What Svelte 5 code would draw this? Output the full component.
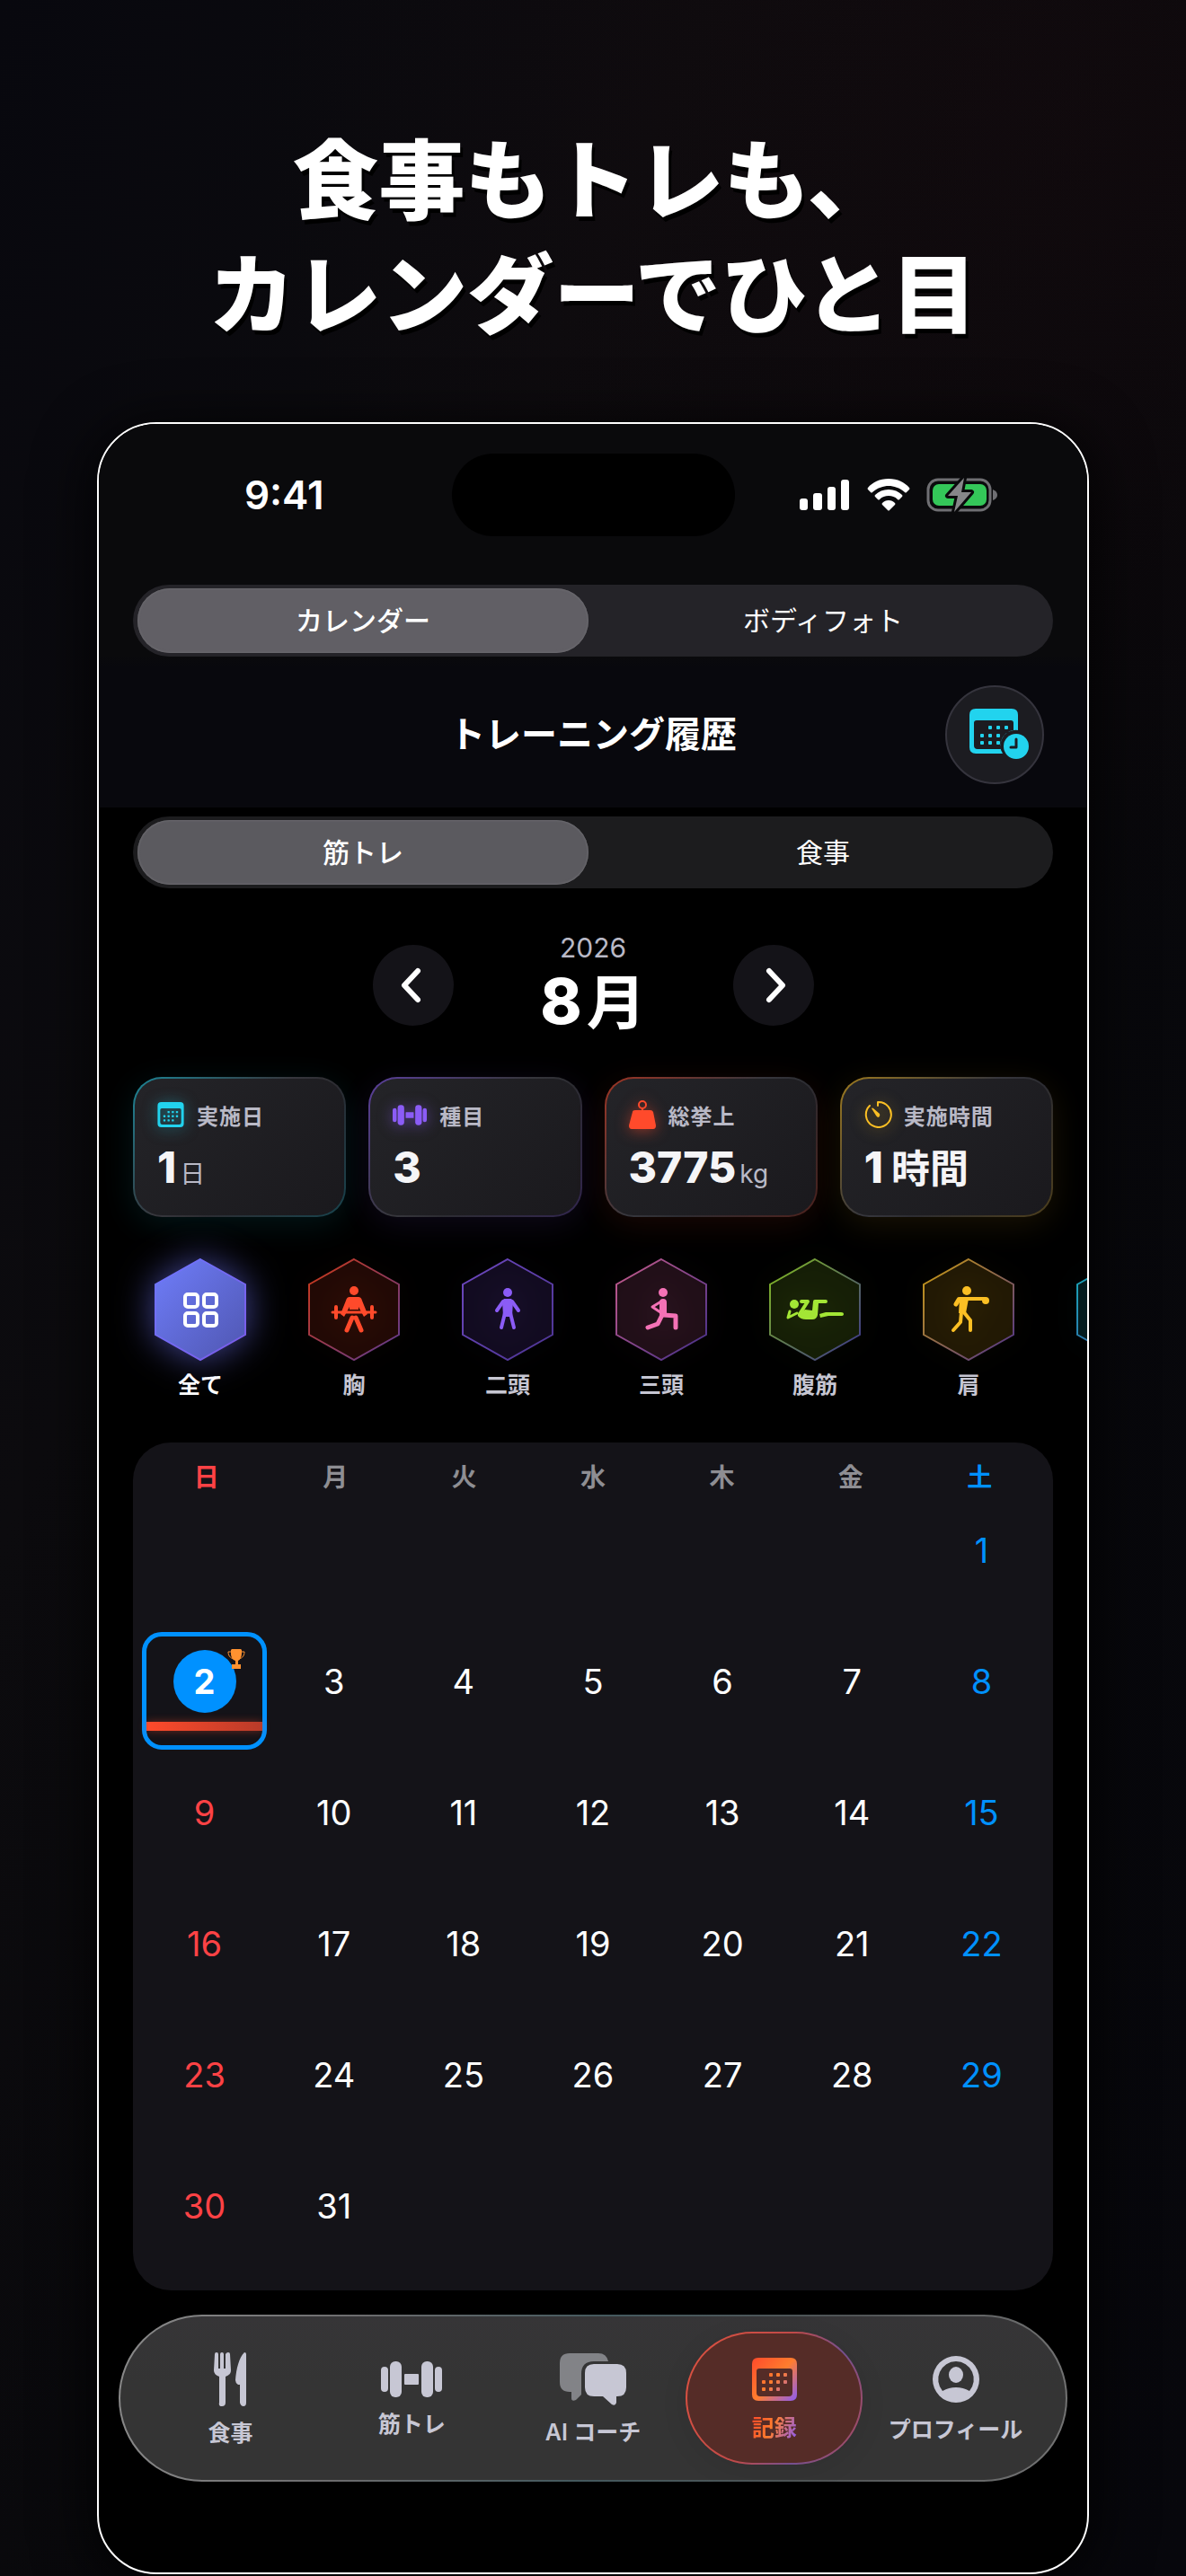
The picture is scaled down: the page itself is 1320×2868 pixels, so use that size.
<script>
  const stats = [
    { id: 'days', label: '実施日', value: '1', big: '', unit: '日', color: '#22d3ee', rgb: '34, 211, 238' },
    { id: 'kinds', label: '種目', value: '3', big: '', unit: '', color: '#8b5cf6', rgb: '139, 92, 246' },
    { id: 'weight', label: '総挙上', value: '3775', big: '', unit: 'kg', color: '#ff4a2b', rgb: '255, 74, 43' },
    { id: 'time', label: '実施時間', value: '1', big: '時間', unit: '', color: '#fbbf24', rgb: '251, 191, 36' }
  ];

  const parts = [
    { id: 'all', label: '全て', color: '#6f74fb', end: '#7a5be8' },
    { id: 'chest', label: '胸', color: '#ff4a2b', end: '#7c4dbb' },
    { id: 'biceps', label: '二頭', color: '#8b5cf6', end: '#6545c0' },
    { id: 'triceps', label: '三頭', color: '#f472b6', end: '#5b3fb4' },
    { id: 'abs', label: '腹筋', color: '#a3e635', end: '#4f46b5' },
    { id: 'shoulder', label: '肩', color: '#fbbf24', end: '#6a45b5' },
    { id: 'more', label: '', color: '#22d3ee', end: '#5a50d0' }
  ];

  const weekdays = ['日', '月', '火', '水', '木', '金', '土'];
  const blanks = Array(6).fill(0);
  const days = Array.from({ length: 31 }, (_, i) => i + 1);

  const tabs = [
    { id: 'meal', label: '食事' },
    { id: 'train', label: '筋トレ' },
    { id: 'coach', label: 'AI コーチ' },
    { id: 'log', label: '記録' },
    { id: 'profile', label: 'プロフィール' }
  ];

  let view = $state('calendar');
  let kind = $state('train');
  let part = $state('all');
  let selected = $state(2);
  let tab = $state('log');
</script>

{#snippet calendarGlyph()}
  <path
    fill-rule="evenodd"
    d="M7 0H43Q50 0 50 7V41Q50 48 43 48H7Q0 48 0 41V7Q0 0 7 0ZM8 12Q5 12 5 15V39Q5 43 9 43H41Q45 43 45 39V15Q45 12 42 12Z"
  />
  {#each [[21, 19], [29, 19], [37, 19], [13, 27], [21, 27], [29, 27], [37, 27], [13, 35], [21, 35], [29, 35]] as [x, y]}
    <rect x={x - 2} y={y - 2} width="4" height="4" rx="1" />
  {/each}
{/snippet}

{#snippet dumbbellGlyph()}
  <rect x="0" y="6" width="8" height="28" rx="4" />
  <rect x="10" y="0" width="13" height="40" rx="6" />
  <rect x="26" y="14" width="16" height="12" rx="1" />
  <rect x="45" y="0" width="13" height="40" rx="6" />
  <rect x="60" y="6" width="8" height="28" rx="4" />
{/snippet}

{#snippet segmented(options, current, pick, extra)}
  <div class="segmented {extra}">
    {#each options as [id, label]}
      <button type="button" aria-pressed={current === id} class:on={current === id} onclick={() => pick(id)}>{label}</button>
    {/each}
  </div>
{/snippet}

<div class="page" lang="ja">
  <h1>食事もトレも、<br />カレンダーでひと目</h1>

  <main class="phone">
    <div class="top">
      <div class="status">
        <span class="clock">9:41</span>
        <span class="island"></span>
        <div class="indicators">
          <svg width="56" height="36" viewBox="0 0 56 36" fill="#fff" aria-label="電波">
            <rect x="0" y="22" width="9" height="13" rx="3" />
            <rect x="15" y="16" width="10" height="19" rx="3" />
            <rect x="31" y="9" width="9" height="26" rx="3" />
            <rect x="46" y="1" width="9" height="34" rx="3" />
          </svg>
          <svg width="50" height="36" viewBox="0 0 50 36" fill="#fff" aria-label="Wi-Fi">
            <path d="M25 0C35 0 43 4 48 10Q49 11 48 12L45 15Q44 16 43 15C37 10 31 8 25 8S13 10 7 15Q6 16 5 15L2 12Q1 11 2 10C7 4 15 0 25 0Z" />
            <path d="M25 12C31 12 36 14 40 18Q41 19 40 20L37 23Q36 24 35 23C32 20 29 19 25 19S18 20 15 23Q14 24 13 23L10 20Q9 19 10 18C14 14 19 12 25 12Z" />
            <path d="M25 24C28 24 30 25 32 27Q33 28 32 29L26 35Q25 36 24 35L18 29Q17 28 18 27C20 25 22 24 25 24Z" />
          </svg>
          <svg width="78" height="38" viewBox="0 0 78 38" aria-label="充電中">
            <rect x="1" y="2" width="69" height="34" rx="11" fill="none" stroke="#6f6f73" stroke-width="3" />
            <rect x="6" y="7" width="60" height="24" rx="7" fill="#34c759" />
            <path d="M73 13Q78 15 78 19T73 25Z" fill="#6f6f73" />
            <path d="M41 0L23 20H34L30 38L49 16H38Z" fill="#868689" stroke="#0a0a0c" stroke-width="6" stroke-linejoin="round" paint-order="stroke" />
          </svg>
        </div>
      </div>

      {@render segmented([['calendar', 'カレンダー'], ['photo', 'ボディフォト']], view, (v) => (view = v), 'cool')}

      <header>
        <h2>トレーニング履歴</h2>
        <button type="button" class="history" aria-label="履歴">
          <svg width="67" height="58" viewBox="0 0 67 58" fill="#22d3ee">
            <path fill-rule="evenodd" d="M7 0H47Q54 0 54 7V24A17 17 0 0 0 37 50H7Q0 50 0 43V7Q0 0 7 0ZM8 13Q5 13 5 16V41Q5 45 9 45H35A17 17 0 0 1 49 24V16Q49 13 46 13Z" />
            {#each [[23, 21], [32, 21], [41, 21], [14, 30], [23, 30], [32, 30], [14, 38], [23, 38], [32, 38]] as [x, y]}
              <rect x={x - 2} y={y - 2} width="4" height="4" rx="1" />
            {/each}
            <circle cx="52" cy="42" r="14" />
            <path d="M52 34V43H46" fill="none" stroke="#1c1c21" stroke-width="3" stroke-linecap="round" stroke-linejoin="round" />
          </svg>
        </button>
      </header>
    </div>

    <div class="body">
      {@render segmented([['train', '筋トレ'], ['meal', '食事']], kind, (v) => (kind = v), '')}

      <div class="month">
        <button type="button" aria-label="前の月">
          <svg width="24" height="40" viewBox="0 0 24 40"><path d="M17 4L2 20L17 36" /></svg>
        </button>
        <div class="month-text"><span class="year">2026</span><strong>8<span>月</span></strong></div>
        <button type="button" aria-label="次の月">
          <svg width="24" height="40" viewBox="0 0 24 40"><path d="M7 4L22 20L7 36" /></svg>
        </button>
      </div>

      <div class="stats">
        {#each stats as s}
          <section class="stat" style="--c: {s.rgb}">
            <div class="stat-head">
              {#if s.id === 'days'}
                <svg width="30" height="28" viewBox="0 0 50 48" fill={s.color}>{@render calendarGlyph()}</svg>
              {:else if s.id === 'kinds'}
                <svg width="38" height="23" viewBox="0 0 68 40" fill={s.color}>{@render dumbbellGlyph()}</svg>
              {:else if s.id === 'weight'}
                <svg width="30" height="32" viewBox="0 0 30 32" fill={s.color}>
                  <circle cx="15" cy="5" r="4" fill="none" stroke={s.color} stroke-width="2" />
                  <path d="M14 8H16V11H24Q26 11 27 13L30 28Q30 32 27 32H3Q0 32 0 28L4 13Q4 11 7 11H14Z" />
                </svg>
              {:else}
                <svg width="30" height="32" viewBox="0 0 30 32" fill={s.color}>
                  <path d="M15 6V2A14 14 0 1 1 6 6" fill="none" stroke={s.color} stroke-width="2" stroke-linecap="round" stroke-linejoin="round" />
                  <path d="M8 9Q9 8 10 9L17 15Q18 17 16 19Q14 19 13 17Z" />
                </svg>
              {/if}
              <span>{s.label}</span>
            </div>
            <div class="stat-value">
              <strong>{s.value}</strong>
              {#if s.big}<strong class="big">{s.big}</strong>{/if}
              {#if s.unit}<span>{s.unit}</span>{/if}
            </div>
          </section>
        {/each}
      </div>

      <div class="parts">
        {#each parts as p}
          <button
            type="button"
            class="part"
            class:on={part === p.id}
            aria-label={p.label || 'その他'}
            onclick={() => (part = p.id)}
          >
            <svg class="hex" style="--glow: {p.color}" width="102" height="114" viewBox="-51 -57 102 114">
              <defs>
                <linearGradient id="edge-{p.id}" x1="0" y1="0" x2="1" y2="1">
                  <stop offset="0.1" stop-color={p.color} />
                  <stop offset="0.95" stop-color={p.end} />
                </linearGradient>
                <linearGradient id="fill-{p.id}" x1="0" y1="0" x2="1" y2="1">
                  <stop offset="0" stop-color="#6f7dfa" />
                  <stop offset="1" stop-color="#4f56b0" />
                </linearGradient>
              </defs>
              <polygon
                points="0,-56 50,-28 50,28 0,56 -50,28 -50,-28"
                fill={p.id === 'all' ? 'url(#fill-all)' : p.color}
                fill-opacity={p.id === 'all' ? 1 : 0.12}
              />
              <polygon
                points="0,-56 50,-28 50,28 0,56 -50,28 -50,-28"
                fill="none"
                stroke="url(#edge-{p.id})"
                stroke-opacity={p.id === 'all' ? 1 : 0.75}
                stroke-width="2"
              />
              <g fill={p.color} stroke={p.color} stroke-linecap="round" stroke-linejoin="round" stroke-width="0">
                {#if p.id === 'all'}
                  <g fill="none" stroke="#fff" stroke-width="4">
                    <rect x="-17" y="-17" width="14" height="14" rx="3" />
                    <rect x="4" y="-17" width="14" height="14" rx="3" />
                    <rect x="-17" y="4" width="14" height="14" rx="3" />
                    <rect x="4" y="4" width="14" height="14" rx="3" />
                  </g>
                {:else if p.id === 'chest'}
                  <circle cx="0" cy="-21" r="5" />
                  <path d="M-5 -14H5Q8 -14 9 -10L15 5L11 8L5 -3V0H-5V-3L-11 8L-15 5L-9 -10Q-8 -14 -5 -14Z" />
                  <path d="M-24 3H24" stroke-width="3" />
                  <path d="M-20 -3V9M20 -3V9" stroke-width="4" />
                  <path d="M-2 9L-8 23M2 9L8 23" stroke-width="5" fill="none" />
                {:else if p.id === 'biceps'}
                  <circle cx="0" cy="-19" r="5" />
                  <path d="M-4 -12H4L6 -10L5 8H-5L-6 -10Z" />
                  <path d="M-5 -9L-12 1M5 -9L12 1" stroke-width="4" fill="none" />
                  <path d="M-3 4L-7 20M3 4L7 20" stroke-width="4" fill="none" />
                {:else if p.id === 'triceps'}
                  <circle cx="2" cy="-19" r="5" />
                  <path d="M2 -8V4" stroke-width="8" fill="none" />
                  <path d="M0 -9L-10 -3L-1 3" stroke-width="3" fill="none" />
                  <path d="M2 6L16 7V20" stroke-width="5" fill="none" />
                  <path d="M1 6L-4 16L-15 20" stroke-width="5" fill="none" />
                {:else if p.id === 'abs'}
                  <circle cx="-23" cy="-6" r="5" />
                  <path d="M-28 2L-30 9L-20 4" stroke-width="3" fill="none" />
                  <path d="M-15 -9H-8L-17 5" stroke-width="4" fill="none" />
                  <path d="M-19 5L-11 0L-3 1L-2 -9Q-2 -11 0 -11H12Q14 -11 14 -9T12 -7H4L3 6Q2 11 -3 11H-10Q-16 11 -19 7Z" />
                  <path d="M5 5L12 3H29Q32 3 32 5T29 7H15L6 9Z" />
                {:else if p.id === 'shoulder'}
                  <circle cx="-2" cy="-21" r="5" />
                  <path d="M-10 -12H18" stroke-width="4" fill="none" />
                  <circle cx="19" cy="-10" r="4" />
                  <path d="M-11 -11L-14 -6" stroke-width="5" fill="none" />
                  <path d="M-10 -12H0L-3 4H-11Z" />
                  <path d="M-8 3L-9 14L-17 23" stroke-width="4" fill="none" />
                  <path d="M-6 2L2 12V23" stroke-width="4" fill="none" />
                {/if}
              </g>
            </svg>
            {#if p.label}<span>{p.label}</span>{/if}
          </button>
        {/each}
      </div>

      <section class="calendar">
        <div class="weekdays">
          {#each weekdays as w}<span>{w}</span>{/each}
        </div>
        <div class="days">
          {#each blanks as _}<span></span>{/each}
          {#each days as d}
            <button
              type="button"
              class="day"
              class:sun={d % 7 === 2}
              class:sat={d % 7 === 1}
              class:selected={selected === d}
              onclick={() => (selected = d)}
            >
              <span class="num" class:today={d === 2}>{d}</span>
              {#if d === 2}
                <span class="bar"></span>
                <svg class="trophy" width="20" height="22" viewBox="0 0 20 22" fill="#ff9230" aria-label="自己ベスト">
                  <path d="M5 0H15L16 1V5C16 9 14 12 12 13V17H15V22H5V17H9V13C6 12 4 9 4 5V1Z" />
                  <path d="M4 3H1C1 7 3 10 7 11M16 3H19C19 7 17 10 13 11" fill="none" stroke="#ff9230" stroke-width="1" />
                </svg>
              {/if}
            </button>
          {/each}
        </div>
      </section>

      <nav>
        {#each tabs as t}
          <button type="button" class="tab" class:on={tab === t.id} onclick={() => (tab = t.id)}>
            {#if t.id === 'meal'}
              <svg width="36" height="60" viewBox="0 0 36 60">
                <path d="M1 2Q1 0 3 0T5 2V18H7V2Q7 0 9 0T11 2V18H13V2Q14 0 16 0T18 2L19 20Q19 25 13 27L13 56Q13 60 9 60T6 56L6 27Q0 25 0 20Z" />
                <path d="M36 2V56Q36 60 33 60T29 56V36H27Q24 34 24 31C25 18 28 6 34 0Q36 0 36 2Z" />
              </svg>
            {:else if t.id === 'train'}
              <svg width="68" height="40" viewBox="0 0 68 40">{@render dumbbellGlyph()}</svg>
            {:else if t.id === 'coach'}
              <svg width="74" height="58" viewBox="0 0 74 58">
                <path d="M11 0H43Q52 0 54 9H38Q24 9 24 23V46L18 52Q13 54 13 50V43H11Q0 43 0 32V11Q0 0 11 0Z" fill="#828387" />
                <path d="M38 12H64Q74 12 74 22V38Q74 48 64 48H63V55Q62 59 58 57L48 48H38Q28 48 28 38V22Q28 12 38 12Z" />
              </svg>
            {:else if t.id === 'log'}
              <svg width="50" height="48" viewBox="0 0 50 48" fill="url(#log-ink)">
                <defs>
                  <linearGradient id="log-ink" gradientUnits="userSpaceOnUse" x1="0" y1="0" x2="50" y2="48">
                    <stop offset="0" stop-color="#ff4a2b" />
                    <stop offset="0.5" stop-color="#ff7d2e" />
                    <stop offset="1" stop-color="#8b5cf6" />
                  </linearGradient>
                </defs>
                {@render calendarGlyph()}
              </svg>
            {:else}
              <svg width="52" height="52" viewBox="0 0 52 52">
                <path fill-rule="evenodd" d="M26 0A26 26 0 1 1 26 52A26 26 0 1 1 26 0ZM26 6A20 20 0 0 0 11 39Q18 35 26 35T41 39A20 20 0 0 0 26 6Z" />
                <ellipse cx="26" cy="21" rx="8" ry="9" />
              </svg>
            {/if}
            <span>{t.label}</span>
          </button>
        {/each}
      </nav>
    </div>
  </main>
</div>

<style>
  :global(body) {
    background: #07070b;
  }

  .page {
    box-sizing: border-box;
    padding: 138px 108px 2px;
    font-family: Inter, 'Noto Sans CJK JP', sans-serif;
    color: #fff;
    background:
      radial-gradient(circle at 90% 5%, rgba(40, 12, 16, 0.22), transparent 900px),
      linear-gradient(115deg, #08080e, #0c0b0e 30%, #08080b 60%, #07070c);
    overflow: hidden;
  }

  button {
    margin: 0;
    padding: 0;
    border: 0;
    background: none;
    color: inherit;
    font: inherit;
    cursor: pointer;
  }

  svg {
    display: block;
    flex: none;
    overflow: visible;
  }

  h1 {
    margin: 0 0 78px;
    font-size: 96px;
    line-height: 127px;
    font-weight: 900;
    text-align: center;
    text-shadow: 3px 5px 0 #000;
  }

  .phone {
    border: 2px solid #fff;
    border-radius: 66px;
    background: #000;
    overflow: hidden;
    box-shadow: 0 10px 60px 10px rgba(0, 0, 0, 0.7);
  }

  .top {
    padding: 0 38px;
    background: linear-gradient(#0a0a0c, #0a0a0c 258px, #08080d 270px);
  }

  .body {
    padding: 10px 38px 101px;
  }

  .status {
    display: grid;
    grid-template-columns: 1fr 315px 1fr;
    align-items: center;
    height: 158px;
    margin-bottom: 21px;
  }

  .clock {
    justify-self: center;
    padding-right: 18px;
    font-size: 44px;
    font-weight: 600;
  }

  .island {
    height: 92px;
    border-radius: 46px;
    background: #000;
  }

  .indicators {
    display: flex;
    align-items: center;
    justify-content: flex-end;
    gap: 18px;
    padding-right: 62px;
  }

  .segmented {
    display: grid;
    grid-template-columns: 1fr 1fr;
    gap: 10px;
    padding: 4px 5px;
    border-radius: 40px;
    background: #1c1c1e;
  }

  .segmented.cool {
    background: #242328;
  }

  .segmented button {
    box-sizing: border-box;
    height: 72px;
    padding-bottom: 4px;
    border-radius: 36px;
    font-size: 30px;
    font-weight: 400;
  }

  .segmented .on {
    background: #5b5a5f;
    box-shadow: inset 0 0 2px 1px #6a696e;
    font-weight: 500;
  }

  .segmented.cool .on {
    background: #615f65;
  }

  header {
    display: grid;
    grid-template-columns: 1fr auto 1fr;
    align-items: center;
    padding: 32px 10px 26px;
  }

  h2 {
    grid-column: 2;
    margin: 0;
    font-size: 40px;
    line-height: 56px;
    font-weight: 700;
  }

  .history {
    display: grid;
    place-items: center;
    justify-self: end;
    box-sizing: border-box;
    width: 110px;
    height: 110px;
    padding-left: 10px;
    border: 2px solid #35343d;
    border-radius: 50%;
    background: #1c1c21;
  }

  .month {
    display: flex;
    justify-content: center;
    align-items: center;
    margin: 48px 0 42px;
  }

  .month button {
    display: grid;
    place-items: center;
    width: 90px;
    height: 90px;
    border-radius: 50%;
    background: #141318;
  }

  .month path {
    fill: none;
    stroke: #fff;
    stroke-width: 6;
    stroke-linecap: round;
    stroke-linejoin: round;
  }

  .month-text {
    display: flex;
    flex-direction: column;
    align-items: center;
    width: 311px;
  }

  .year {
    font-size: 30px;
    line-height: 36px;
    color: #b9b9c6;
  }

  .month strong {
    display: flex;
    align-items: baseline;
    gap: 5px;
    height: 84px;
    font-size: 70px;
    line-height: 84px;
    font-weight: 800;
  }

  .month strong span {
    font-size: 66px;
    font-weight: 700;
  }

  .stats {
    display: grid;
    grid-template-columns: repeat(4, 1fr);
    gap: 25px;
  }

  .stat {
    box-sizing: border-box;
    height: 156px;
    padding: 25px 0 0 25px;
    border: 2px solid transparent;
    border-radius: 32px;
    background:
      linear-gradient(135deg, #242428, #1a191d) padding-box,
      linear-gradient(135deg, rgba(var(--c), 0.6), rgba(120, 120, 130, 0.35) 45%, rgba(100, 100, 110, 0.3) 60%, rgba(var(--c), 0.25)) border-box,
      linear-gradient(#141418, #141418) border-box;
    box-shadow: 0 8px 36px rgba(var(--c), 0.1);
  }

  .stat-head {
    display: flex;
    align-items: center;
    gap: 14px;
    height: 30px;
    font-size: 24px;
    font-weight: 700;
    letter-spacing: 1px;
    color: #b9b9c6;
    white-space: nowrap;
  }

  .stat-head svg {
    filter: drop-shadow(0 2px 8px rgba(var(--c), 0.5));
  }

  .stat-value {
    display: flex;
    align-items: baseline;
    gap: 4px;
    margin-top: 18px;
    line-height: 52px;
    white-space: nowrap;
  }

  .stat-value strong {
    font-size: 48px;
    font-weight: 800;
    color: #f5f5f7;
  }

  .stat-value .big {
    padding-left: 5px;
    font-size: 43px;
    font-weight: 700;
  }

  .stat-value span {
    font-size: 28px;
    color: #b9b9c6;
  }

  .parts {
    display: flex;
    gap: 21px;
    margin: 46px -38px 49px 0;
  }

  .part {
    display: flex;
    flex: none;
    flex-direction: column;
    align-items: center;
    gap: 12px;
    width: 150px;
    font-size: 25px;
    line-height: 30px;
    font-weight: 600;
    color: #c6c6d2;
  }

  .part.on {
    color: #fff;
  }

  .hex {
    filter: drop-shadow(0 0 14px color-mix(in srgb, var(--glow) 12%, transparent));
  }

  .on .hex {
    filter: drop-shadow(0 0 20px color-mix(in srgb, var(--glow) 60%, transparent));
  }

  .calendar {
    padding: 20px 10px 18px;
    border-radius: 42px;
    background: #141318;
  }

  .weekdays {
    display: grid;
    grid-template-columns: repeat(7, 1fr);
    margin-bottom: 7px;
    font-size: 28px;
    line-height: 38px;
    font-weight: 600;
    text-align: center;
    color: #8e8e93;
  }

  .weekdays :first-child {
    color: #ff4245;
  }

  .weekdays :last-child {
    color: #0091ff;
  }

  .days {
    display: grid;
    grid-template-columns: repeat(7, 1fr);
    grid-auto-rows: 131px;
    gap: 15px 5px;
  }

  .day {
    position: relative;
    display: flex;
    flex-direction: column;
    align-items: center;
    gap: 10px;
    box-sizing: border-box;
    padding-top: 15px;
    border: 5px solid transparent;
    border-radius: 22px;
    font-size: 38px;
  }

  .day.selected {
    border-color: #0091ff;
  }

  .day.sun {
    color: #ff4245;
  }

  .day.sat {
    color: #0091ff;
  }

  .num {
    width: 70px;
    height: 70px;
    border-radius: 50%;
    line-height: 70px;
    text-align: center;
  }

  .num.today {
    background: #0091ff;
    color: #fff;
    font-weight: 700;
  }

  .bar {
    width: 100%;
    height: 10px;
    background: linear-gradient(90deg, #ff4a2b, #b93b29);
    box-shadow: 0 0 10px rgba(255, 74, 43, 0.4);
  }

  .trophy {
    position: absolute;
    top: 14px;
    right: 19px;
  }

  nav {
    display: grid;
    grid-template-columns: repeat(5, 1fr);
    gap: 5px;
    box-sizing: border-box;
    height: 186px;
    margin: 27px -16px 0;
    padding: 17px 24px;
    border: 2px solid transparent;
    border-radius: 93px;
    background:
      linear-gradient(#363537, #343434 40%) padding-box,
      linear-gradient(100deg, #8a8a8a, #6c6c6e 25%, #44595e 50%, #505456 75%, #747474) border-box;
  }

  .tab {
    display: flex;
    flex-direction: column;
    justify-content: center;
    align-items: center;
    gap: 18px;
    border: 2px solid transparent;
    border-radius: 74px;
    font-size: 25px;
    line-height: 24px;
    font-weight: 600;
    color: #c7c7d4;
    fill: #c7c7d4;
    white-space: nowrap;
  }

  .tab.on {
    background:
      linear-gradient(#552c27, #552c27) padding-box,
      linear-gradient(115deg, #e0523f, #c04a48 45%, #75508f 70%, #b04a58) border-box;
    box-shadow: 0 6px 30px rgba(0, 0, 0, 0.08);
  }

  .tab.on span {
    background: linear-gradient(115deg, #ff4a2b, #ff7d2e 45%, #8b5cf6);
    background-clip: text;
    color: transparent;
  }
</style>
